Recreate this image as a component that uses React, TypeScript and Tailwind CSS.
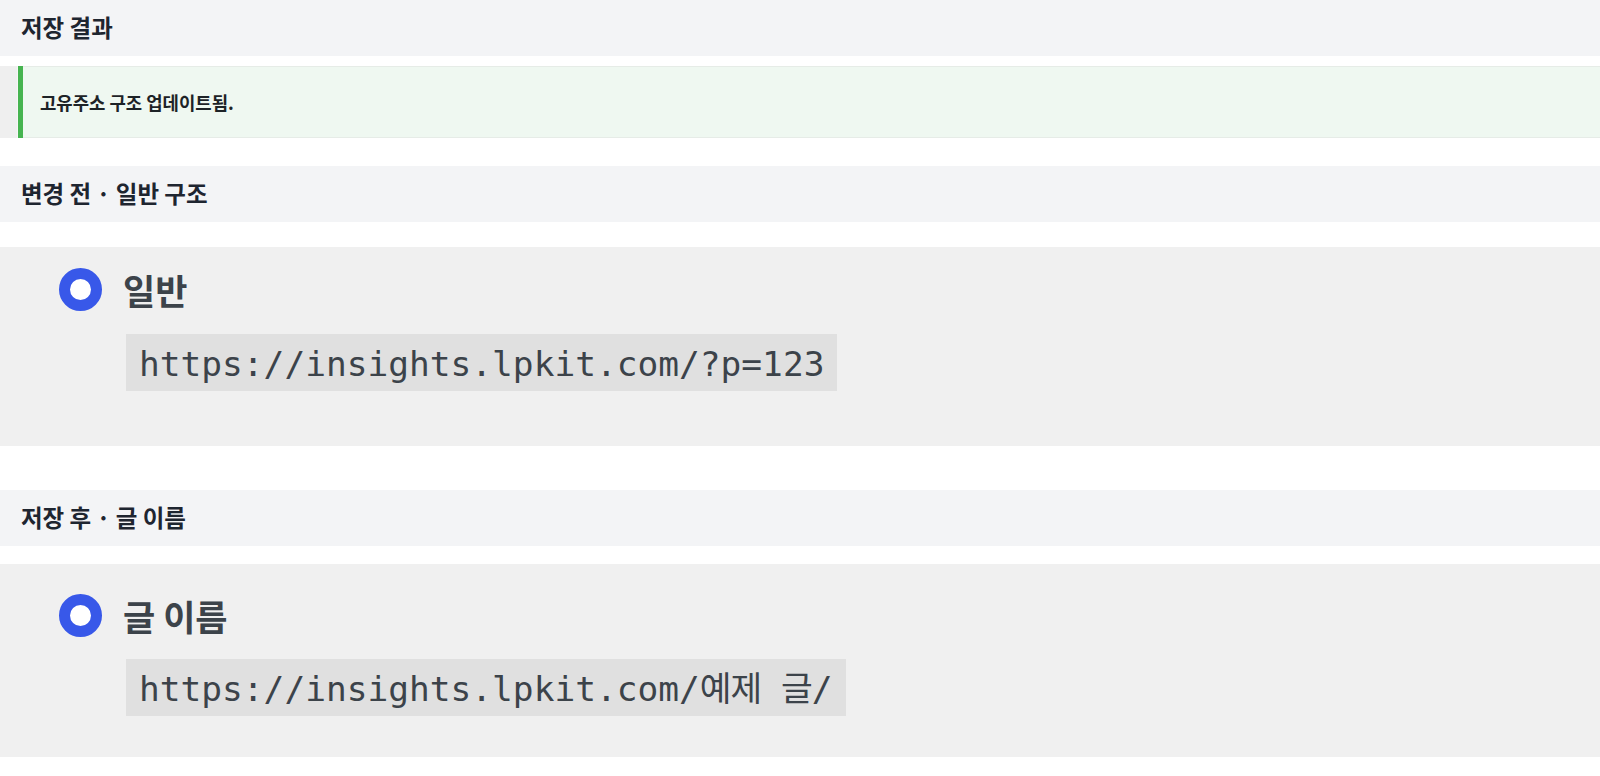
import React from "react";

const KR = { fontFamily: '"Noto Sans CJK KR", "Noto Sans", sans-serif' };

function SectionHeader({ children, className = "" }: { children: React.ReactNode; className?: string }) {
  return (
    <div className={`h-[56px] bg-[#f3f4f6] flex items-center pl-[21px] ${className}`}>
      <span className="text-[23.5px] font-bold text-[#1e2530] leading-none" style={KR}>
        {children}
      </span>
    </div>
  );
}

function Radio() {
  return <div className="w-[43px] h-[43px] rounded-full border-[11px] border-[#3858e9] bg-white shrink-0" />;
}

function Code({ children }: { children: React.ReactNode }) {
  return (
    <div
      className="self-start ml-[67px] bg-[#e0e0e0] px-[13px] pt-[10px] pb-[7px] text-[34.5px] leading-[40px] text-[#3c434a] whitespace-nowrap"
      style={{ fontFamily: '"DejaVu Sans Mono", "Noto Sans CJK KR", monospace' }}
    >
      {children}
    </div>
  );
}

export default function App() {
  return (
    <div className="w-[1600px] h-[776px] bg-white flex flex-col overflow-hidden" style={KR}>
      <SectionHeader>저장 결과</SectionHeader>

      <div className="mt-[10px] h-[72px] flex">
        <div className="w-[17px] bg-[#efefef]" />
        <div className="w-px bg-[#f6f6f6]" />
        <div className="w-[5px] bg-[#46b450]" />
        <div className="flex-1 bg-[#eff8f1] border-y border-[#e6ece7] flex items-center pl-[17px]">
          <span className="text-[17.8px] font-semibold text-[#1d2327]" style={KR}>
            고유주소 구조 업데이트됨.
          </span>
        </div>
      </div>

      <SectionHeader className="mt-[28px]">변경 전 · 일반 구조</SectionHeader>

      <div className="mt-[25px] h-[199px] bg-[#f0f0f0] flex flex-col pl-[59px] pt-[21px]">
        <div className="flex items-center gap-[21px]">
          <Radio />
          <span className="text-[35px] font-semibold text-[#3c434a] leading-none" style={KR}>
            일반
          </span>
        </div>
        <div className="mt-[23px] flex flex-col">
          <Code>https://insights.lpkit.com/?p=123</Code>
        </div>
      </div>

      <SectionHeader className="mt-[44px]">저장 후 · 글 이름</SectionHeader>

      <div className="mt-[18px] h-[193px] bg-[#f0f0f0] flex flex-col pl-[59px] pt-[30px]">
        <div className="flex items-center gap-[21px]">
          <Radio />
          <span className="text-[35px] font-semibold text-[#3c434a] leading-none" style={KR}>
            글 이름
          </span>
        </div>
        <div className="mt-[22px] flex flex-col">
          <Code>
            https://insights.lpkit.com/<span className="tracking-[-1px]">예제 글</span>/
          </Code>
        </div>
      </div>
    </div>
  );
}
